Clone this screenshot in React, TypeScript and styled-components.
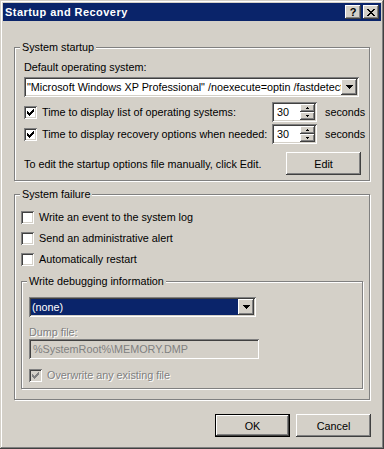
import React from "react";
import styled, { createGlobalStyle, css } from "styled-components";

const GlobalStyle = createGlobalStyle`
  html, body {
    margin: 0;
    padding: 0;
    background: #d4d0c8;
  }
  body {
    font-family: "Liberation Sans", Arial, sans-serif;
    font-size: 10.8px;
    color: #000;
  }
`;

const raised = css`
  background: #d4d0c8;
  box-shadow: inset -1px -1px #404040, inset 1px 1px #fff,
    inset -2px -2px #808080, inset 2px 2px #d4d0c8;
`;

const sunken = css`
  box-shadow: inset 1px 1px #808080, inset -1px -1px #fff,
    inset 2px 2px #404040, inset -2px -2px #d4d0c8;
`;

const Window = styled.div`
  width: 384px;
  height: 449px;
  box-sizing: border-box;
  padding: 3px;
  background: #d4d0c8;
  box-shadow: inset -1px -1px #404040, inset 1px 1px #d4d0c8,
    inset -2px -2px #808080, inset 2px 2px #fff;
  display: flex;
  flex-direction: column;
`;

const TitleBar = styled.div`
  height: 18px;
  background: #0a246a;
  display: flex;
  align-items: center;
  padding: 0 2px;
  color: #fff;
  font-weight: bold;
  font-size: 11px;
`;

const TitleText = styled.div`
  flex: 1;
  white-space: nowrap;
  letter-spacing: 0.45px;
`;

const CaptionButtons = styled.div`
  display: flex;
  gap: 2px;
`;

const CaptionButton = styled.div`
  ${raised};
  width: 16px;
  height: 14px;
  display: flex;
  align-items: center;
  justify-content: center;
  color: #000;
  font-weight: bold;
  font-size: 11px;
  line-height: 14px;
`;

const Client = styled.div`
  flex: 1;
  display: flex;
  flex-direction: column;
  padding: 26px 11px 0 11px;
`;

const Group = styled.div<{ $height?: number }>`
  position: relative;
  box-sizing: border-box;
  border: 1px solid #808080;
  box-shadow: inset 1px 1px #fff, 1px 1px #fff;
  ${(p) => (p.$height ? `height: ${p.$height}px;` : "")}
`;

const StartupGroup = styled(Group)`
  padding: 13px 8px 0 9px;
`;

const FailureGroup = styled(Group)`
  margin-top: 13px;
  padding: 16px 6px 10px 6px;
`;

const DebugGroup = styled(Group)`
  margin-top: 15px;
  padding: 15px 7px 6px 7px;
`;

const Legend = styled.div`
  position: absolute;
  top: -7px;
  left: 5px;
  padding: 0 2px;
  background: #d4d0c8;
  line-height: 13px;
  white-space: nowrap;
`;

const Label = styled.div<{ $disabled?: boolean; $top?: number }>`
  line-height: 13px;
  height: 13px;
  white-space: nowrap;
  margin-top: ${(p) => p.$top ?? 0}px;
  ${(p) =>
    p.$disabled &&
    css`
      color: #808080;
      text-shadow: 1px 1px #fff;
    `}
`;

const Combo = styled.div<{ $width: number; $top: number }>`
  ${sunken};
  width: ${(p) => p.$width}px;
  height: 20px;
  margin-top: ${(p) => p.$top}px;
  box-sizing: border-box;
  padding: 2px;
  background: #fff;
  display: flex;
`;

const ComboText = styled.div<{ $selected?: boolean }>`
  flex: 1;
  overflow: hidden;
  white-space: nowrap;
  line-height: 16px;
  padding-left: 1px;
  ${(p) =>
    p.$selected &&
    css`
      background: #0a246a;
      color: #fff;
    `}
`;

const DropButton = styled.div`
  ${raised};
  width: 16px;
  height: 16px;
  flex: none;
  display: flex;
  align-items: center;
  justify-content: center;
`;

const SpinRow = styled.div<{ $top: number }>`
  display: grid;
  grid-template-columns: 240px 45px auto;
  column-gap: 8px;
  align-items: center;
  height: 20px;
  margin-top: ${(p) => p.$top}px;
  white-space: nowrap;
`;

const CheckLine = styled.div<{ $top?: number }>`
  display: flex;
  align-items: center;
  gap: 5px;
  height: 13px;
  line-height: 13px;
  white-space: nowrap;
  margin-top: ${(p) => p.$top ?? 0}px;
`;

const CheckBox = styled.div<{ $disabled?: boolean }>`
  ${sunken};
  width: 13px;
  height: 13px;
  flex: none;
  box-sizing: border-box;
  background: ${(p) => (p.$disabled ? "#d4d0c8" : "#fff")};
  display: flex;
  align-items: center;
  justify-content: center;
`;

const Spin = styled.div`
  ${sunken};
  width: 45px;
  height: 20px;
  box-sizing: border-box;
  padding: 2px;
  background: #fff;
  display: flex;
`;

const SpinText = styled.div`
  flex: 1;
  padding-left: 3px;
  line-height: 16px;
`;

const SpinButtons = styled.div`
  width: 15px;
  display: flex;
  flex-direction: column;
`;

const SpinButton = styled.div`
  ${raised};
  height: 8px;
  display: flex;
  align-items: center;
  justify-content: center;
`;

const EditRow = styled.div`
  display: flex;
  align-items: center;
  justify-content: space-between;
  height: 23px;
  margin-top: 8px;
  white-space: nowrap;
`;

const PushButton = styled.button<{ $default?: boolean }>`
  ${raised};
  width: 75px;
  height: 23px;
  border: none;
  padding: 0;
  margin: 0;
  font-family: inherit;
  font-size: 10.8px;
  color: #000;
  ${(p) =>
    p.$default &&
    css`
      box-shadow: inset 0 0 0 1px #000, inset -2px -2px #404040,
        inset 2px 2px #fff, inset -3px -3px #808080;
    `}
`;

const TextBox = styled.div<{ $width: number }>`
  ${sunken};
  width: ${(p) => p.$width}px;
  height: 20px;
  box-sizing: border-box;
  padding: 2px 4px;
  background: #d4d0c8;
  color: #808080;
  line-height: 16px;
  white-space: nowrap;
  overflow: hidden;
`;

const ButtonRow = styled.div`
  display: flex;
  justify-content: flex-end;
  gap: 6px;
  margin-top: 14px;
  margin-right: -1px;
`;

const CloseGlyph = () => (
  <svg width="8" height="7" viewBox="0 0 8 7" shapeRendering="crispEdges">
    <path
      fill="#000"
      d="M0 0h2v1H0z M6 0h2v1H6z M1 1h2v1H1z M5 1h2v1H5z M2 2h4v1H2z M3 3h2v1H3z M2 4h4v1H2z M1 5h2v1H1z M5 5h2v1H5z M0 6h2v1H0z M6 6h2v1H6z"
    />
  </svg>
);

const DownArrow = () => (
  <svg width="7" height="4" viewBox="0 0 7 4" shapeRendering="crispEdges">
    <path fill="#000" d="M0 0h7v1H0z M1 1h5v1H1z M2 2h3v1H2z M3 3h1v1H3z" />
  </svg>
);

const TinyArrow = ({ up }: { up?: boolean }) => (
  <svg width="3" height="2" viewBox="0 0 3 2" shapeRendering="crispEdges">
    <path fill="#000" d={up ? "M1 0h1v1H1z M0 1h3v1H0z" : "M0 0h3v1H0z M1 1h1v1H1z"} />
  </svg>
);

const Check = ({ color }: { color: string }) => (
  <svg width="7" height="7" viewBox="0 0 7 7" shapeRendering="crispEdges">
    <path
      fill={color}
      d="M0 2h1v3H0z M1 3h1v3H1z M2 4h1v3H2z M3 3h1v3H3z M4 2h1v3H4z M5 1h1v3H5z M6 0h1v3H6z"
    />
  </svg>
);

type CheckProps = {
  label: string;
  checked?: boolean;
  disabled?: boolean;
  top?: number;
};

const CheckOption = ({ label, checked, disabled, top }: CheckProps) => (
  <CheckLine $top={top}>
    <CheckBox $disabled={disabled}>
      {checked && <Check color={disabled ? "#808080" : "#000"} />}
    </CheckBox>
    <Label $disabled={disabled}>{label}</Label>
  </CheckLine>
);

const SpinBox = ({ value }: { value: string }) => (
  <Spin>
    <SpinText>{value}</SpinText>
    <SpinButtons>
      <SpinButton>
        <TinyArrow up />
      </SpinButton>
      <SpinButton>
        <TinyArrow />
      </SpinButton>
    </SpinButtons>
  </Spin>
);

export default function App() {
  return (
    <>
      <GlobalStyle />
      <Window>
        <TitleBar>
          <TitleText>Startup and Recovery</TitleText>
          <CaptionButtons>
            <CaptionButton>?</CaptionButton>
            <CaptionButton>
              <CloseGlyph />
            </CaptionButton>
          </CaptionButtons>
        </TitleBar>
        <Client>
          <StartupGroup $height={134}>
            <Legend>System startup</Legend>
            <Label>Default operating system:</Label>
            <Combo $width={335} $top={3}>
              <ComboText>
                "Microsoft Windows XP Professional" /noexecute=optin /fastdetect
              </ComboText>
              <DropButton>
                <DownArrow />
              </DropButton>
            </Combo>
            <SpinRow $top={5}>
              <CheckOption label="Time to display list of operating systems:" checked />
              <SpinBox value="30" />
              <span>seconds</span>
            </SpinRow>
            <SpinRow $top={2}>
              <CheckOption label="Time to display recovery options when needed:" checked />
              <SpinBox value="30" />
              <span>seconds</span>
            </SpinRow>
            <EditRow>
              <span>To edit the startup options file manually, click Edit.</span>
              <PushButton>Edit</PushButton>
            </EditRow>
          </StartupGroup>

          <FailureGroup>
            <Legend>System failure</Legend>
            <CheckOption label="Write an event to the system log" />
            <CheckOption label="Send an administrative alert" top={8} />
            <CheckOption label="Automatically restart" top={8} />
            <DebugGroup>
              <Legend>Write debugging information</Legend>
              <Combo $width={227} $top={0}>
                <ComboText $selected>(none)</ComboText>
                <DropButton>
                  <DownArrow />
                </DropButton>
              </Combo>
              <Label $disabled $top={9}>
                Dump file:
              </Label>
              <TextBox $width={230}>%SystemRoot%\MEMORY.DMP</TextBox>
              <CheckOption label="Overwrite any existing file" checked disabled top={10} />
            </DebugGroup>
          </FailureGroup>

          <ButtonRow>
            <PushButton $default>OK</PushButton>
            <PushButton>Cancel</PushButton>
          </ButtonRow>
        </Client>
      </Window>
    </>
  );
}
